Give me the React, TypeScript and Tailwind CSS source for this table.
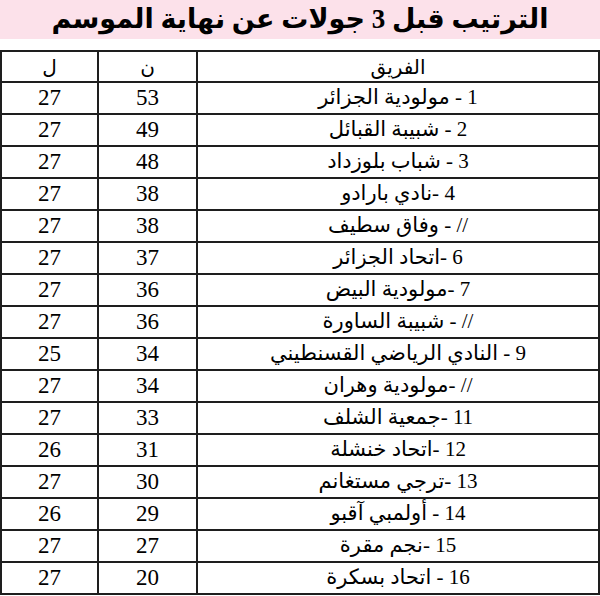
const rows = [
  { team: "1 - مولودية الجزائر", pts: 53, played: 27 },
  { team: "2 - شبيبة القبائل", pts: 49, played: 27 },
  { team: "3 - شباب بلوزداد", pts: 48, played: 27 },
  { team: "4 -نادي بارادو", pts: 38, played: 27 },
  { team: "// - وفاق سطيف", pts: 38, played: 27 },
  { team: "6 -اتحاد الجزائر", pts: 37, played: 27 },
  { team: "7 -مولودية البيض", pts: 36, played: 27 },
  { team: "// - شبيبة الساورة", pts: 36, played: 27 },
  { team: "9 - النادي الرياضي القسنطيني", pts: 34, played: 25 },
  { team: "// -مولودية وهران", pts: 34, played: 27 },
  { team: "11 -جمعية الشلف", pts: 33, played: 27 },
  { team: "12 -اتحاد خنشلة", pts: 31, played: 26 },
  { team: "13 -ترجي مستغانم", pts: 30, played: 27 },
  { team: "14 - أولمبي آقبو", pts: 29, played: 26 },
  { team: "15 -نجم مقرة", pts: 27, played: 27 },
  { team: "16 - اتحاد بسكرة", pts: 20, played: 27 },
];

const cell = "flex items-center justify-center border-r-2 border-b-2 border-[#1e1e1e]";

export default function App() {
  return (
    <div className="w-[600px] h-[596px] bg-white text-black font-['Liberation_Serif','DejaVu_Sans',serif] overflow-hidden">
      <div className="h-[39px] bg-[#fce1ea] flex items-center justify-center">
        <h1 dir="rtl" className="text-[27px] font-bold leading-none">
          الترتيب قبل 3 جولات عن نهاية الموسم
        </h1>
      </div>

      <div className="mt-[11px] border-t-2 border-l-2 border-[#1e1e1e] grid grid-cols-[97px_99px_1fr]">
        <div className={`${cell} h-[31px] text-[20px]`} dir="rtl">ل</div>
        <div className={`${cell} h-[31px] text-[20px]`} dir="rtl">ن</div>
        <div className={`${cell} h-[31px] text-[20px]`} dir="rtl">الفريق</div>

        {rows.map((r, i) => (
          <div key={i} className="contents">
            <div className={`${cell} h-[32px] text-[23px]`}>{r.played}</div>
            <div className={`${cell} h-[32px] text-[23px]`}>{r.pts}</div>
            <div className={`${cell} h-[32px] text-[21px]`} dir="rtl">{r.team}</div>
          </div>
        ))}
      </div>
    </div>
  );
}
